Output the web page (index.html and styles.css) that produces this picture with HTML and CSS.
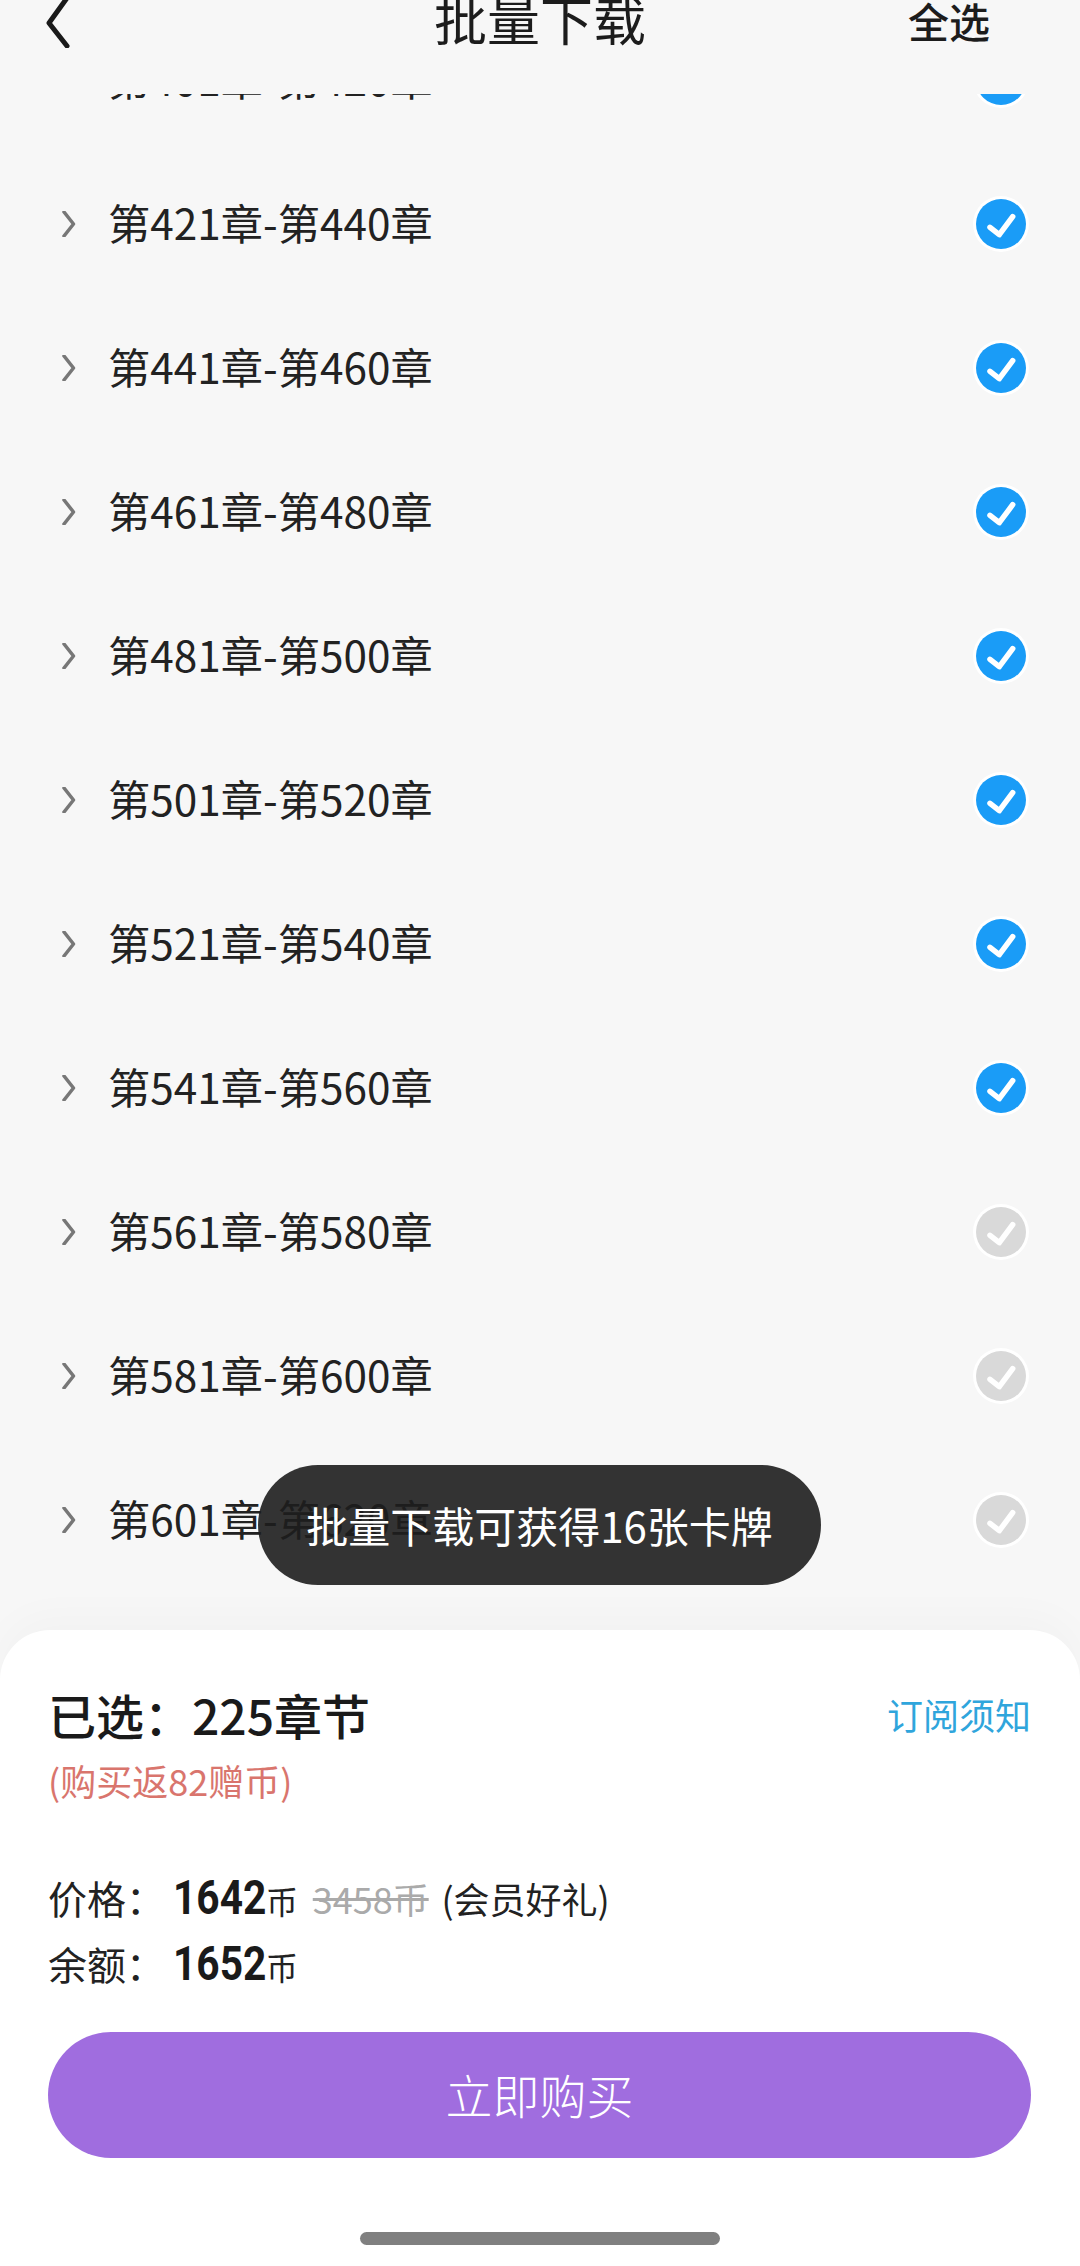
FILE: index.html
```html
<!DOCTYPE html>
<html lang="zh-CN">
<head>
    <meta charset="UTF-8">
    <meta name="viewport" content="width=device-width, initial-scale=1.0">
    <title>批量下载</title>
    <link rel="stylesheet" href="styles.css">
</head>
<body>
<svg class="defs" width="0" height="0">
    <defs>
        <symbol id="chevron" viewBox="0 0 14 26"><path d="M2 1 L11.5 13 L2 25" fill="none" stroke="#777" stroke-width="3.5" stroke-linecap="round" stroke-linejoin="round"/></symbol>
        <symbol id="tick" viewBox="0 0 56 56"><circle cx="28" cy="28" r="25"/><path d="M17 31.3 L26.3 38.7 L39.7 20.7" fill="none" stroke="#fff" stroke-width="5.5" stroke-linecap="round" stroke-linejoin="round"/></symbol>
    </defs>
</svg>

<header class="topbar">
    <svg class="back" width="24" height="48" viewBox="0 0 24 48"><path d="M21 -2 L3 23 L21 46" fill="none" stroke="#1a1a1a" stroke-width="5" stroke-linecap="round" stroke-linejoin="round"/></svg>
    <h1 class="title">批量下载</h1>
    <span class="select-all">全选</span>
</header>

<div class="list-wrap">
    <ul class="list">
        <li class="row"><svg class="chev"><use href="#chevron"/></svg><span class="name">第401章-第420章</span><svg class="tick on"><use href="#tick"/></svg></li>
        <li class="row"><svg class="chev"><use href="#chevron"/></svg><span class="name">第421章-第440章</span><svg class="tick on"><use href="#tick"/></svg></li>
        <li class="row"><svg class="chev"><use href="#chevron"/></svg><span class="name">第441章-第460章</span><svg class="tick on"><use href="#tick"/></svg></li>
        <li class="row"><svg class="chev"><use href="#chevron"/></svg><span class="name">第461章-第480章</span><svg class="tick on"><use href="#tick"/></svg></li>
        <li class="row"><svg class="chev"><use href="#chevron"/></svg><span class="name">第481章-第500章</span><svg class="tick on"><use href="#tick"/></svg></li>
        <li class="row"><svg class="chev"><use href="#chevron"/></svg><span class="name">第501章-第520章</span><svg class="tick on"><use href="#tick"/></svg></li>
        <li class="row"><svg class="chev"><use href="#chevron"/></svg><span class="name">第521章-第540章</span><svg class="tick on"><use href="#tick"/></svg></li>
        <li class="row"><svg class="chev"><use href="#chevron"/></svg><span class="name">第541章-第560章</span><svg class="tick on"><use href="#tick"/></svg></li>
        <li class="row"><svg class="chev"><use href="#chevron"/></svg><span class="name">第561章-第580章</span><svg class="tick off"><use href="#tick"/></svg></li>
        <li class="row"><svg class="chev"><use href="#chevron"/></svg><span class="name">第581章-第600章</span><svg class="tick off"><use href="#tick"/></svg></li>
        <li class="row"><svg class="chev"><use href="#chevron"/></svg><span class="name">第601章-第620章</span><svg class="tick off"><use href="#tick"/></svg></li>
    </ul>
</div>

<div class="toast">批量下载可获得16张卡牌</div>

<section class="sheet">
    <div class="sheet-head">
        <span class="picked">已选：225章节</span>
        <span class="notice">订阅须知</span>
    </div>
    <div class="bonus">(购买返82赠币)</div>
    <div class="amount first">
        <span class="label">价格：</span><b class="num">1642</b><span class="unit">币</span>
        <s class="old">3458币</s>
        <span class="gift">(会员好礼)</span>
    </div>
    <div class="amount">
        <span class="label">余额：</span><b class="num">1652</b><span class="unit">币</span>
    </div>
    <button class="buy">立即购买</button>
    <div class="home-bar"></div>
</section>
</body>
</html>
```

FILE: styles.css
```css
* {
    box-sizing: border-box;
}
html, body {
    margin: 0;
    padding: 0;
}
body {
    position: relative;
    width: 1080px;
    height: 2266px;
    overflow: hidden;
    display: flex;
    flex-direction: column;
    background: #f7f7f7;
    color: #1c1c1c;
    font-family: "Noto Sans CJK SC", "Noto Sans", sans-serif;
}
.defs {
    position: absolute;
}

.topbar {
    flex: none;
    height: 94px;
    padding: 0 90px 54px;
    display: grid;
    grid-template-columns: 1fr auto 1fr;
    grid-template-rows: 40px;
    align-items: center;
}
.back {
    margin: 8px 0 0 -44px;
}
.title {
    margin: 0 0 4px;
    font-size: 53px;
    font-weight: 400;
    line-height: 40px;
}
.select-all {
    justify-self: end;
    font-size: 41px;
    font-weight: 500;
    line-height: 40px;
}

.list-wrap {
    flex: 1;
    min-height: 0;
    overflow: hidden;
}
.list {
    list-style: none;
    margin: -86px 0 0;
    padding: 0;
}
.row {
    height: 144px;
    padding: 0 50px 0 62px;
    display: flex;
    align-items: center;
}
.chev {
    flex: none;
    width: 14px;
    height: 26px;
    margin-right: 32px;
}
.name {
    flex: 1;
    padding-bottom: 5px;
    font-size: 42.3px;
    color: #222;
}
.tick {
    flex: none;
    width: 56px;
    height: 56px;
    margin-right: 1px;
    border-radius: 50%;
    background: #fff;
}
.tick.on {
    fill: #1a9cf7;
}
.tick.off {
    fill: #d9d9d9;
}

.toast {
    position: absolute;
    left: 258px;
    top: 1465px;
    width: 563px;
    height: 120px;
    border-radius: 60px;
    background: rgba(29, 29, 29, 0.9);
    color: #fff;
    font-size: 42px;
    line-height: 120px;
    text-align: center;
    white-space: nowrap;
}

.sheet {
    flex: none;
    height: 636px;
    padding: 54px 49px 0;
    background: #fff;
    border-radius: 50px 50px 0 0;
    box-shadow: 0 -14px 40px rgba(0, 0, 0, 0.025);
}
.sheet-head {
    height: 60px;
    display: flex;
    align-items: center;
    justify-content: space-between;
}
.picked {
    margin-left: -1px;
    font-size: 48px;
    font-weight: 500;
    color: #1a1a1a;
}
.notice {
    font-size: 36px;
    color: #2fa5dc;
}
.bonus {
    margin-top: 14px;
    margin-left: -1px;
    height: 44px;
    line-height: 44px;
    font-size: 36px;
    color: #d9756d;
}
.amount {
    height: 66px;
    line-height: 66px;
    font-size: 39px;
    white-space: nowrap;
    color: #222;
}
.amount.first {
    margin-top: 62px;
}
.label {
    display: inline-block;
    width: 125px;
    margin-left: -1px;
}
.num {
    display: inline-block;
    width: 90px;
    font-family: "Roboto", sans-serif;
    font-size: 49px;
    font-weight: 700;
    color: #1a1a1a;
    transform: scaleX(0.83);
    transform-origin: left center;
}
.unit {
    font-size: 32px;
    margin-left: 3px;
}
.old {
    margin-left: 6px;
    font-size: 36px;
    color: #aaa;
}
.gift {
    margin-left: 4px;
    font-size: 36px;
}
.buy {
    display: block;
    width: 983px;
    height: 126px;
    margin: 36px 0 0 -1px;
    padding: 0 0 4px;
    border: 0;
    border-radius: 63px;
    background: #a06ddf;
    color: #fff;
    font-family: inherit;
    font-size: 47px;
    font-weight: 300;
}
.home-bar {
    width: 360px;
    height: 13px;
    margin: 74px 0 0 311px;
    border-radius: 7px;
    background: #808080;
}
```
